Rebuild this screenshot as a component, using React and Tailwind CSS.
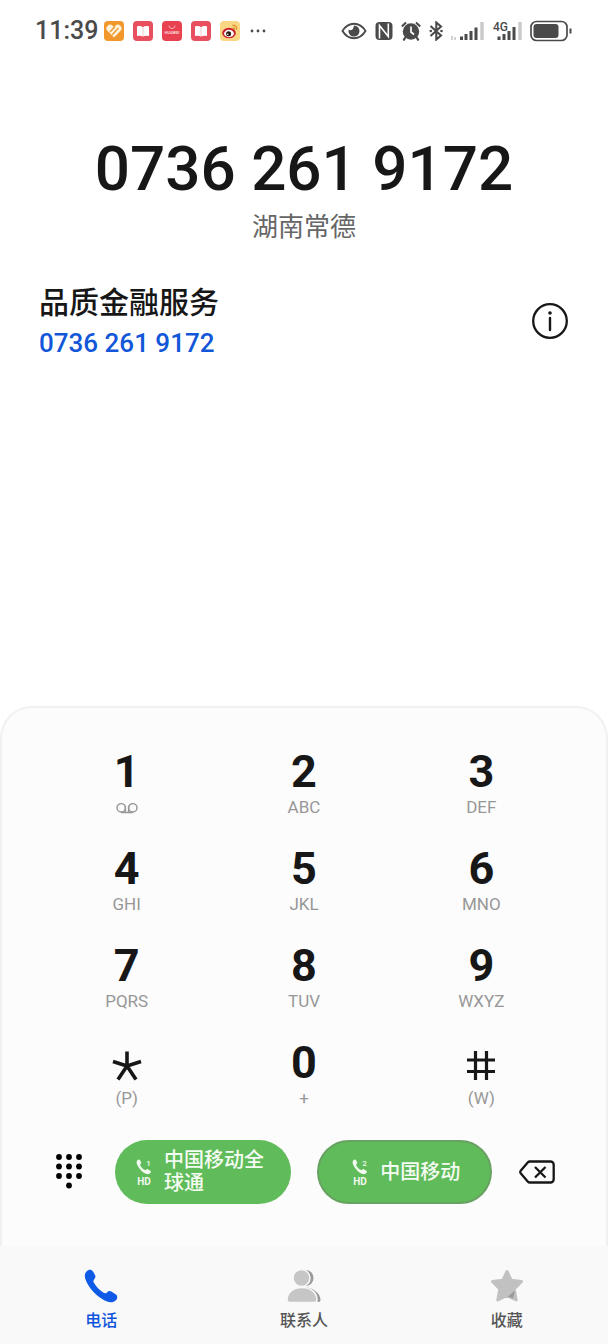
import React from 'react';

const keys = [
  { digit: '1', sub: 'voicemail' },
  { digit: '2', sub: 'ABC' },
  { digit: '3', sub: 'DEF' },
  { digit: '4', sub: 'GHI' },
  { digit: '5', sub: 'JKL' },
  { digit: '6', sub: 'MNO' },
  { digit: '7', sub: 'PQRS' },
  { digit: '8', sub: 'TUV' },
  { digit: '9', sub: 'WXYZ' },
  { digit: '*', sub: '(P)' },
  { digit: '0', sub: '+' },
  { digit: '#', sub: '(W)' },
];

function AppBadges() {
  return (
    <div className="flex items-center gap-[9px]">
      <svg className="size-5" viewBox="0 0 20 20">
        <rect width="20" height="20" rx="4" fill="#f2972b" />
        <path d="M10 16.5 3.6 10a3.6 3.6 0 0 1 5-5.2L10 6l1.4-1.2a3.6 3.6 0 0 1 5 5.2z" fill="#fff3dc" />
        <path d="m6 11 5-5.500M8 14l6.500-7" stroke="#f2972b" strokeWidth="1.300" fill="none" />
      </svg>
      <BookBadge />
      <svg className="size-5" viewBox="0 0 20 20">
        <rect width="20" height="20" rx="4" fill="#e8414f" />
        <path d="M7 4.500a3 3 0 0 0 6 0" stroke="#f7b0b5" strokeWidth="1" fill="none" />
        <text x="10" y="13" fontSize="4" fontWeight="700" textAnchor="middle" fill="#fbd5d8">HUAWEI</text>
      </svg>
      <BookBadge />
      <svg className="size-5" viewBox="0 0 20 20">
        <rect width="20" height="20" rx="4" fill="#fbd784" />
        <ellipse cx="9" cy="12" rx="6.800" ry="5.200" fill="#c8232c" />
        <ellipse cx="9" cy="12.500" rx="4.900" ry="3.700" fill="#fff" />
        <circle cx="8.600" cy="12.700" r="2.500" fill="#26160f" />
        <circle cx="7.800" cy="13.300" r="0.800" fill="#fff" />
        <path d="M12.500 4.500c2.800-.6 4.800 1.600 4 4.300M12.800 6.900c1.200-.2 2 .7 1.700 1.800" stroke="#e08a2b" strokeWidth="1.300" fill="none" />
      </svg>
    </div>
  );
}

function BookBadge() {
  return (
    <svg className="size-5" viewBox="0 0 20 20">
      <rect width="20" height="20" rx="4" fill="#e8505f" />
      <path d="M4 5.500c2.500-.8 4.500-.5 6 .7 1.500-1.200 3.500-1.500 6-.7v9.500c-2.500-.6-4.500-.4-6 .6-1.500-1-3.500-1.200-6-.6z" fill="#fff" />
      <path d="M10 6.500v8.500" stroke="#f6b9bf" strokeWidth="0.800" />
    </svg>
  );
}

function StatusIcons() {
  return (
    <div className="flex items-center gap-2 text-[#4a4a4a]">
      <svg className="h-5 w-[26px]" viewBox="0 0 26 20" fill="none">
        <path d="M1.500 10C4.500 5 8.500 2.800 13 2.800S21.500 5 24.500 10c-3 5-7 7.200-11.500 7.200S4.500 15 1.500 10z" stroke="currentColor" strokeWidth="1.900" />
        <path d="M13 4.500a5.500 5.500 0 1 1-5.300 4c.9 1 2.700 1 3.700 0s1.200-2.600 1.600-4z" fill="currentColor" />
      </svg>
      <svg className="h-5 w-[18px]" viewBox="0 0 18 20" fill="none">
        <rect x="0.500" y="1" width="17" height="18" rx="4" fill="currentColor" />
        <path d="M4.500 17.500V4.500l8.800 11V2.500M4.500 4.500 13.300 15.500" stroke="#fff" strokeWidth="1.600" />
      </svg>
      <svg className="h-5 w-5" viewBox="1 0 20 20" fill="none">
        <circle cx="11" cy="10.500" r="8.200" fill="currentColor" />
        <path d="M1.800 5.500 6 1.500M20.200 5.500 16 1.500" stroke="currentColor" strokeWidth="2" />
        <path d="m5.500 16-2 3.500M16.500 16l2 3.500" stroke="currentColor" strokeWidth="2.200" />
        <path d="M11 5.500v5.500l3 2.500" stroke="#fff" strokeWidth="1.700" />
      </svg>
      <svg className="h-5 w-[14px]" viewBox="0 0 14 20" fill="none">
        <path d="m1.500 5 10.500 9.500L7.300 18.500V1.500L12 5.500 1.500 15" stroke="currentColor" strokeWidth="2.100" />
        <circle cx="1.800" cy="10" r="1.300" fill="currentColor" />
        <circle cx="12.500" cy="10" r="1.300" fill="currentColor" />
      </svg>
      <svg className="h-5 w-[34px]" viewBox="0 0 34 20">
        <path d="M1 15v4M4 16v3" stroke="#c4c4c4" strokeWidth="1.500" />
        <path d="M10.500 15.500V19M15 13v6M20 10v9M25 6.500V19" stroke="currentColor" strokeWidth="3" />
        <path d="M31 1v18" stroke="#c9c9c9" strokeWidth="3.400" />
      </svg>
      <svg className="h-5 w-[29px]" viewBox="0 0 29 20">
        <text x="0" y="10" fontSize="12" fontWeight="500" fill="currentColor">4G</text>
        <path d="M6 15.500V19M11 13v6M16 10v9M21 6V19" stroke="currentColor" strokeWidth="3" />
        <path d="M27 1v18" stroke="#c9c9c9" strokeWidth="3.400" />
      </svg>
      <svg className="h-[22px] w-[42px]" viewBox="0 0 42 22" fill="none">
        <rect x="1" y="1.500" width="36" height="19" rx="5.500" stroke="currentColor" strokeWidth="1.700" />
        <rect x="3.500" y="4" width="25" height="14" rx="3" fill="currentColor" />
        <path d="M40.500 8.500v5" stroke="currentColor" strokeWidth="2" />
      </svg>
    </div>
  );
}

function SimIcon({ slot }) {
  return (
    <svg className="h-7 w-4 shrink-0" viewBox="0 0 16 28" fill="#f1faef">
      <path d="M1.200 2.500C2 1.500 3.300 1.200 4 2.200l1 1.800c.4.800.1 1.500-.6 2.200-.4.500-.2 1 .2 1.700 1 1.700 2.200 2.900 3.800 3.800.7.400 1.200.5 1.700.1.700-.7 1.500-.9 2.200-.4l2 1.300c.9.700.7 1.900-.2 2.600-1.600 1.400-4 .9-6.300-.6C4.700 12.600 2.200 9.500 1 6.300.5 4.800.4 3.500 1.200 2.500z" />
      <text x="12.500" y="8" fontSize="8" fontWeight="500" textAnchor="middle">{slot}</text>
      <text x="8" y="27" fontSize="10" fontWeight="700" textAnchor="middle">HD</text>
    </svg>
  );
}

function KeySymbol({ digit }) {
  if (digit === '*') {
    return (
      <svg className="h-[38px] w-8" viewBox="0 -6 32 38" fill="none" stroke="currentColor" strokeWidth="3.600">
        <path d="M16 1.500V16M16 16 2 11.500M16 16l14-4.500M16 16 7 29.500M16 16l9 13.500" />
      </svg>
    );
  }
  if (digit === '#') {
    return (
      <svg className="h-[38px] w-8" viewBox="0 -6 32 38" fill="none" stroke="currentColor" strokeWidth="3.200">
        <path d="M10.500 1v29M21.500 1v29M2 10h28M2 21.500h28" />
      </svg>
    );
  }
  return digit;
}

function VoicemailIcon() {
  return (
    <svg className="h-3 w-[22px]" viewBox="0 0 22 12" fill="none" stroke="currentColor" strokeWidth="1.400">
      <circle cx="5.200" cy="5.800" r="4.200" />
      <circle cx="16.800" cy="5.800" r="4.200" />
      <path d="M9.400 4v6.200M12.600 4v6.200M5.200 10.500h11.600" />
    </svg>
  );
}

export default function App() {
  return (
    <div className="flex min-h-screen flex-col bg-white font-['Roboto','Noto_Sans_CJK_SC',sans-serif] text-[#171717]">
      <header className="flex h-[62px] items-center justify-between pr-9 pl-[35px]">
        <div className="flex items-center gap-[6px]">
          <span className="text-[25px] font-medium text-[#4a4a4a]">11:39</span>
          <AppBadges />
          <svg className="ml-1 h-5 w-4" viewBox="0 0 16 20" fill="#4a4a4a">
            <circle cx="2" cy="10" r="1.400" />
            <circle cx="8" cy="10" r="1.400" />
            <circle cx="14" cy="10" r="1.400" />
          </svg>
        </div>
        <StatusIcons />
      </header>

      <main className="flex flex-1 flex-col">
        <section className="pt-[71px] text-center">
          <h1 className="text-[62px] leading-[72px] font-medium">0736 261 9172</h1>
          <p className="mt-[6px] text-[26px] leading-8 text-[#666666]">湖南常德</p>
        </section>

        <section className="flex items-start justify-between pt-10 pr-10 pl-[39px]">
          <div>
            <h2 className="text-[30px] leading-10 font-medium">品质金融服务</h2>
            <a href="tel:07362619172" className="block text-[26px] leading-10 font-medium text-[#1257d8]">
              0736 261 9172
            </a>
          </div>
          <button type="button" aria-label="详情" className="pt-5">
            <svg className="size-9" viewBox="0 0 36 36" fill="none" stroke="currentColor">
              <circle cx="18" cy="18" r="16.800" strokeWidth="2.300" />
              <path d="M18 15v12" strokeWidth="2.400" strokeLinecap="round" />
              <circle cx="18" cy="10" r="1.800" fill="currentColor" stroke="none" />
            </svg>
          </button>
        </section>
      </main>

      <section className="rounded-t-[32px] border-2 border-b-0 border-[#f1f1f1] bg-[#fcfcfc] pb-[42px]">
        <div className="grid grid-cols-3 px-9 pt-[37px]">
          {keys.map((key) => (
            <button key={key.digit} type="button" className="flex h-[97px] flex-col items-center">
              <span className="flex h-[54px] items-center text-[45px] font-bold">
                <KeySymbol digit={key.digit} />
              </span>
              <span className="flex h-[18px] items-center text-[17px] text-[#979797]">
                {key.sub === 'voicemail' ? <VoicemailIcon /> : key.sub}
              </span>
            </button>
          ))}
        </div>

        <div className="mt-[7px] flex items-center pr-[51px] pl-[53px]">
          <button type="button" aria-label="拨号盘" className="mr-8">
            <svg className="h-9 w-7" viewBox="0 0 28 36">
              {[4, 14, 24].map((x) =>
                [3, 12.5, 22].map((y) => <circle key={`${x}-${y}`} cx={x} cy={y} r="2.900" />)
              )}
              <circle cx="14" cy="31.500" r="2.900" />
            </svg>
          </button>
          <div className="mr-[27px] grid flex-1 grid-cols-2 gap-[26px]">
            <button type="button" className="flex h-16 items-center gap-3 rounded-full bg-[#60bb5a] pr-6 pl-[21px] text-left text-[20px] leading-[23px] font-medium text-[#f4fbf2]">
              <SimIcon slot="1" />
              <span>中国移动全球通</span>
            </button>
            <button type="button" className="flex h-16 items-center justify-center gap-3 rounded-full border-2 border-[#67a263] bg-[#60bb5a] pl-1 text-[20px] leading-[23px] font-medium text-[#f4fbf2]">
              <SimIcon slot="2" />
              <span>中国移动</span>
            </button>
          </div>
          <button type="button" aria-label="删除">
            <svg className="h-6 w-9" viewBox="0 0 36 24" fill="none" stroke="currentColor" strokeWidth="2.300">
              <path d="M11 1.500h20.500a3.200 3.200 0 0 1 3.200 3.200v14.600a3.200 3.200 0 0 1-3.200 3.200H11c-1 0-1.700-.4-2.300-1.100l-6.800-7.800c-.8-1-.8-2.200 0-3.200l6.800-7.800C9.300 1.900 10 1.500 11 1.500z" />
              <path d="m16 7 10.500 10.500M26.500 7 16 17.500" />
            </svg>
          </button>
        </div>
      </section>

      <nav className="grid h-[98px] grid-cols-3 bg-[#f9f9f9] pt-[22px] text-[16px] leading-6 font-medium text-[#555555]">
        <a href="#phone" className="flex flex-col items-center gap-[5px] text-[#0f55dc]">
          <svg className="size-9" viewBox="0 0 36 36" fill="#0f5be8">
            <path d="M3.500 3.500C5.500 1.200 8.500 1.200 10 3.500l1.900 3.200c.9 1.600.7 3-.5 4.300-1.200 1.400-1.300 2.300-.6 3.600 2.400 4.300 5.500 7.600 9.800 10.200 1.300.7 2.300.7 3.400-.4 1.200-1.400 2.800-1.700 4.300-.8l4.300 2.600c2 1.300 2.200 3.900.6 5.700-3.500 3.800-8.800 2.700-14.400-1.100C10.700 25.500 4.500 18 2.200 10.500 1.400 7.700 1.800 5.300 3.500 3.500z" />
          </svg>
          <span>电话</span>
        </a>
        <a href="#contacts" className="flex flex-col items-center gap-[5px]">
          <svg className="size-9" viewBox="0 0 36 36">
            <circle cx="19.500" cy="10" r="8" fill="#999999" />
            <path d="M10 34c0-9 4-14.500 10-14.500S34.500 25 34.500 32c0 1.200-.7 2-2 2z" fill="#999999" />
            <circle cx="15.500" cy="10" r="8.500" fill="#c6c6c6" stroke="#f9f9f9" strokeWidth="1.500" />
            <path d="M1 32c0-7 5.500-12.500 15-12.500S31 25 31 32c0 1.500-.8 2.500-2.300 2.500H3.300C1.800 34.500 1 33.500 1 32z" fill="#c6c6c6" stroke="#f9f9f9" strokeWidth="1.500" />
          </svg>
          <span>联系人</span>
        </a>
        <a href="#favorites" className="flex flex-col items-center gap-[5px]">
          <svg className="size-9" viewBox="0 0 36 36">
            <path d="M18 3.500l4.200 8.800 10.300 1.200-7.300 7.500 2 11L18 27.500 8.800 32l2-11-7.300-7.500 10.300-1.200z" fill="#c1c1c1" stroke="#c1c1c1" strokeWidth="3" strokeLinejoin="round" />
            <path d="M26 22.500 19 28.500l5 2z" fill="#999999" />
          </svg>
          <span>收藏</span>
        </a>
      </nav>
    </div>
  );
}
